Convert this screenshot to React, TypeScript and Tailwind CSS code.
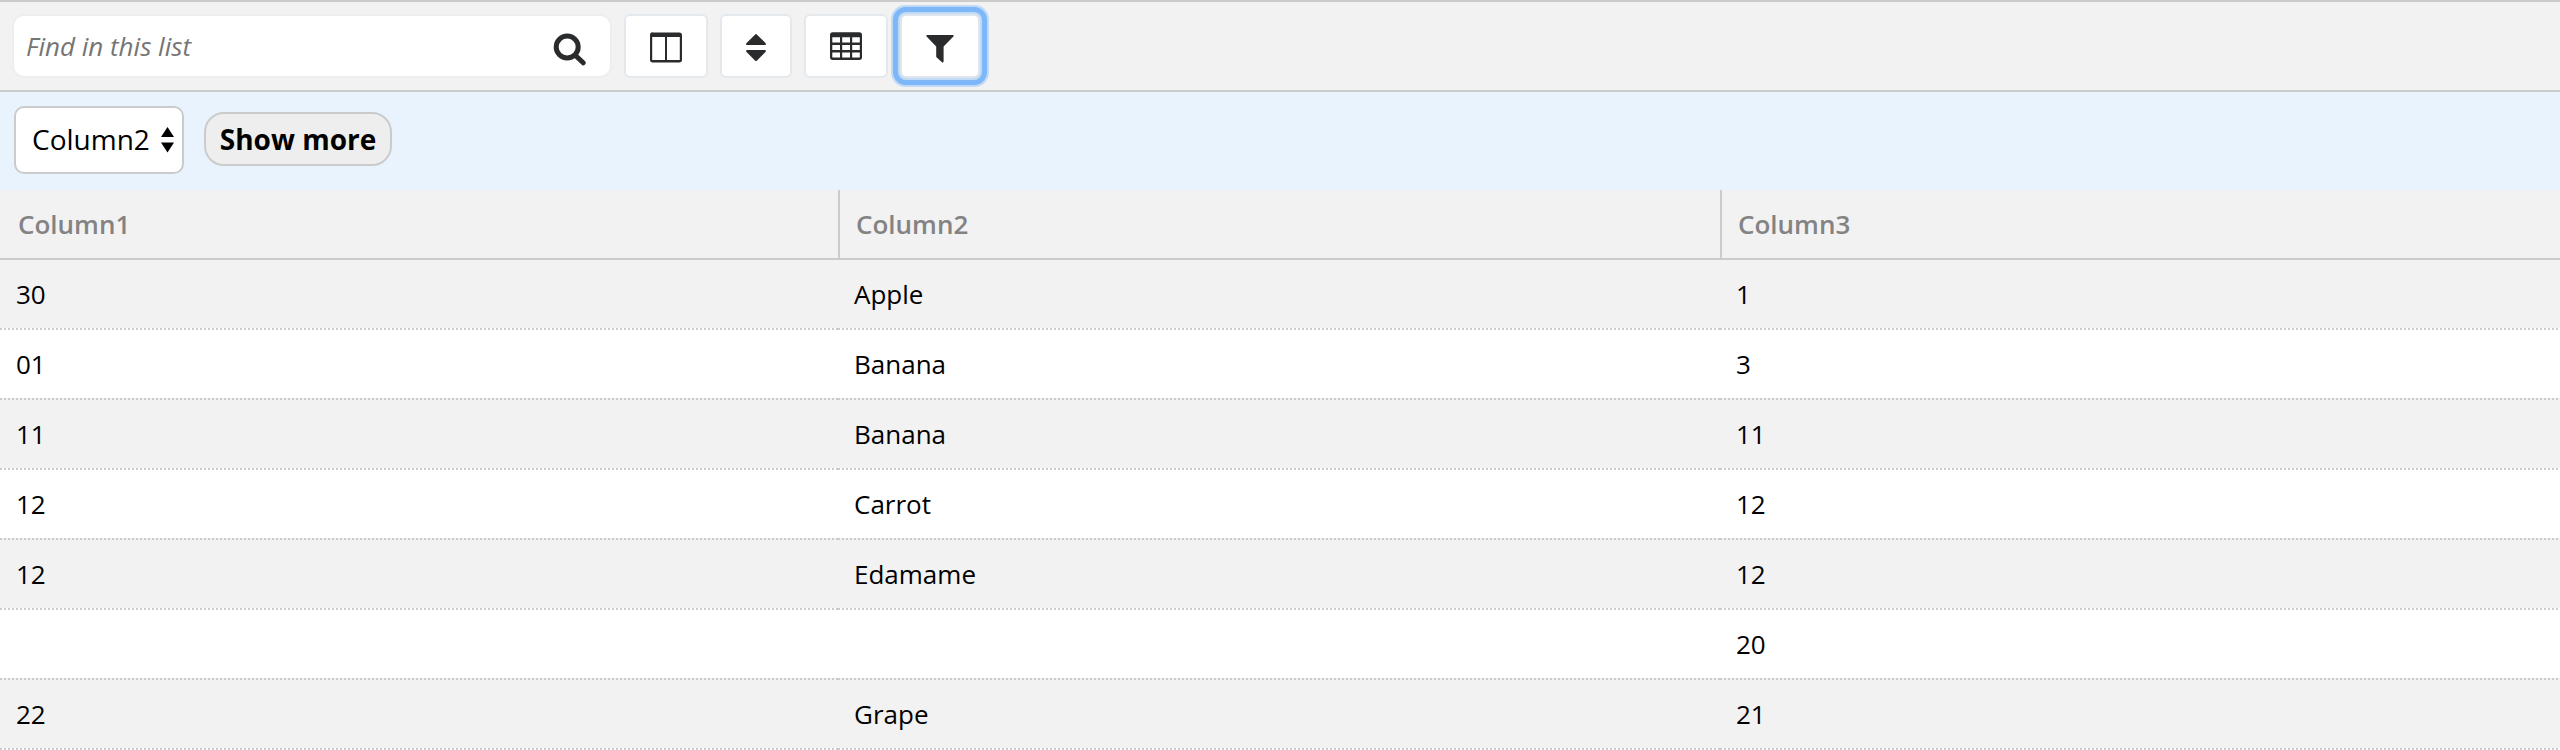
import React from "react";

const COLUMNS = ["Column1", "Column2", "Column3"];

const ROWS = [
  ["30", "Apple", "1"],
  ["01", "Banana", "3"],
  ["11", "Banana", "11"],
  ["12", "Carrot", "12"],
  ["12", "Edamame", "12"],
  ["", "", "20"],
  ["22", "Grape", "21"],
];

const GRID = "grid grid-cols-[838px_882px_840px]";

function SearchIcon() {
  return (
    <svg className="mt-[6px] h-[33px] w-[33px] shrink-0" viewBox="0 0 33 33" fill="none" stroke="#292b2c">
      <circle cx="14.2" cy="14" r="11" strokeWidth="5" />
      <path d="M22.5 22.5L30.2 29.8" strokeWidth="5" strokeLinecap="round" />
    </svg>
  );
}

function ColumnsIcon() {
  return (
    <svg className="h-[31px] w-8" viewBox="0 -0.4 32 31" fill="#292b2c">
      <path
        fillRule="evenodd"
        d="M3 0H29.3A2.7 2.7 0 0 1 32 2.7V27.3A2.7 2.7 0 0 1 29.3 30H2.7A2.7 2.7 0 0 1 0 27.3V2.7A2.7 2.7 0 0 1 3 0ZM2.2 4.7V27.6H15V4.7ZM17 4.7V27.6H29.8V4.7Z"
      />
    </svg>
  );
}

function SortIcon() {
  return (
    <svg className="h-7 w-5" viewBox="0 0 20 28" fill="#292b2c">
      <path d="M9.2.4Q10 -.2 10.8.4L19.7 9.3Q20.3 11 18.8 11H1.2Q-.3 11 .3 9.3ZM.3 17.7Q-.3 16 1.2 16H18.8Q20.3 16 19.7 17.7L10.8 26.7Q10 27.4 9.2 26.7Z" />
    </svg>
  );
}

function TableIcon() {
  return (
    <svg className="h-7 w-8" viewBox="0 0 32 28" fill="#292b2c">
      <path
        fillRule="evenodd"
        d="M2.7 0.2H29.3A2.7 2.7 0 0 1 32 2.9V25.3A2.7 2.7 0 0 1 29.3 28H2.7A2.7 2.7 0 0 1 0 25.3V2.9A2.7 2.7 0 0 1 2.7 0.2ZM2.3 5.2V10.5H10V5.2ZM12.2 5.2V10.5H20V5.2ZM22.2 5.2V10.5H29.8V5.2ZM2.3 13V18H10V13ZM12.2 13V18H20V13ZM22.2 13V18H29.8V13ZM2.3 20.4V25.6H10V20.4ZM12.2 20.4V25.6H20V20.4ZM22.2 20.4V25.6H29.8V20.4Z"
      />
    </svg>
  );
}

function FilterIcon() {
  return (
    <svg className="h-7 w-7" viewBox="0 0 28 28" fill="#292b2c">
      <path d="M1.2 0H26.8Q28.2.3 27.4 1.6L17.6 11.4V26.5Q17.4 28 16 27.2L10.7 22.6Q10.2 22 10.2 21V11.4L.6 1.6Q-.2.3 1.2 0Z" />
    </svg>
  );
}

export default function App() {
  return (
    <div className="h-[750px] w-[2560px] overflow-hidden bg-white font-['Open_Sans','Noto_Sans',sans-serif] text-black">
      <div className="flex h-[92px] items-start border-y-2 border-[#cbcbcb] bg-[#f2f2f2] pt-3 pl-3">
        <label className="flex h-16 w-[600px] items-center rounded-[12px] border-2 border-[#eeeeee] bg-white pr-[24px] pl-3">
          <input
            className="min-w-0 flex-1 bg-transparent text-[26px] italic outline-none placeholder:text-[#757575]"
            placeholder="Find in this list"
          />
          <SearchIcon />
        </label>
        <button className="ml-3 flex h-16 w-[84px] items-center justify-center rounded-[6px] border-2 border-[#e4e9ee] bg-white pt-[3px]">
          <ColumnsIcon />
        </button>
        <button className="ml-3 flex h-16 w-[72px] items-center justify-center rounded-[6px] border-2 border-[#e4e9ee] bg-white pt-1">
          <SortIcon />
        </button>
        <button className="ml-3 flex h-16 w-[84px] items-center justify-center rounded-[6px] border-2 border-[#e4e9ee] bg-white">
          <TableIcon />
        </button>
        <button className="ml-3 flex h-16 w-20 items-center justify-center rounded-[6px] border-2 border-[#dde5ee] bg-white pt-[6px] shadow-[0_0_0_2px_#c1daf6,0_0_0_7px_#7db7f7,0_0_0_9px_#bfdaf7]">
          <FilterIcon />
        </button>
      </div>

      <div className="flex h-[98px] items-start bg-[#e8f3fd] pl-[14px]">
        <button className="mt-[14px] flex h-[68px] w-[170px] items-center rounded-[10px] border-2 border-[#cbcbcb] bg-white pl-4 text-[28px]">
          <span className="w-[117px] pb-[2px] text-left">Column2</span>
          <svg className="ml-[12px] h-[26px] w-[13px] shrink-0" viewBox="0 0 13 26">
            <path d="M6.5 0L13 10H0ZM0 15.5H13L6.5 25.5Z" />
          </svg>
        </button>
        <button className="mt-5 ml-5 flex h-[54px] w-[188px] items-center justify-center rounded-[20px] border-2 border-[#cbcbcb] bg-[#eeeeee] text-[28px] font-bold">
          Show more
        </button>
      </div>

      <div className={`${GRID} h-[70px] border-b-2 border-[#cbcbcb] bg-[#f2f2f2]`}>
        {COLUMNS.map((name, i) => (
          <div
            key={name}
            className={`flex items-center border-l-2 pl-4 text-[26px] font-semibold text-[#838383] ${
              i === 0 ? "border-transparent" : "border-[#cbcbcb]"
            }`}
          >
            {name}
          </div>
        ))}
      </div>

      {ROWS.map((row, r) => (
        <div key={r} className={`${GRID} ${r % 2 === 0 ? "bg-white" : "bg-[#f2f2f2]"}`}>
          {row.map((cell, c) => (
            <div key={c} className="h-[70px]">
              <div
                className={`flex h-[68px] items-center pl-4 text-[26px] ${r % 2 === 0 ? "bg-[#f2f2f2]" : "bg-white"}`}
              >
                {cell}
              </div>
              <div className="h-[2px] bg-[repeating-linear-gradient(90deg,#cbcbcb_0_2px,transparent_2px_4px)]" />
            </div>
          ))}
        </div>
      ))}
    </div>
  );
}
